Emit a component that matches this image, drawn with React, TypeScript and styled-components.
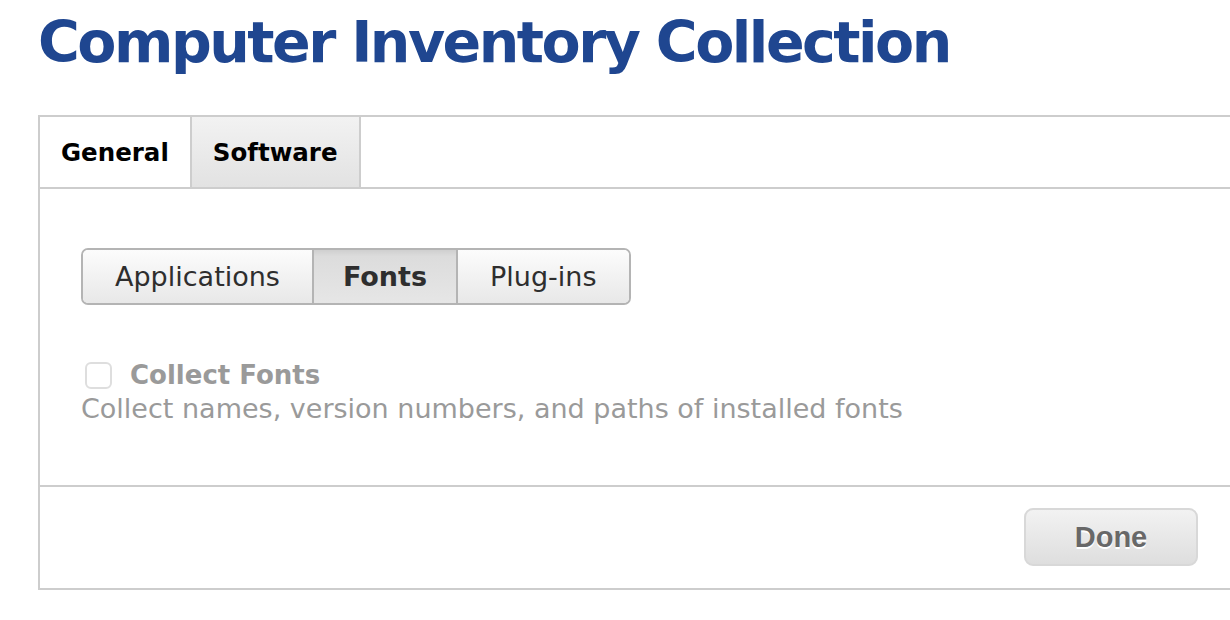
import styled, { createGlobalStyle } from "styled-components";

const Global = createGlobalStyle`
    html, body {
        margin: 0;
        padding: 0;
        background: #fff;
        overflow: hidden;
    }
    body {
        font-family: "DejaVu Sans", "Liberation Sans", sans-serif;
    }
`

const Page = styled.div`
    width: 1230px;
    height: 620px;
    padding-left: 38px;
    box-sizing: border-box;
    overflow: hidden;
`

const Heading = styled.h1`
    margin: 0;
    padding-top: 6px;
    height: 115px;
    box-sizing: border-box;
    font-size: 57px;
    font-weight: bold;
    color: #1f4690;
    letter-spacing: -2.5px;
    line-height: 72px;
`

const Panel = styled.div`
    width: 1220px;
    border: 2px solid #cdcdcd;
    box-sizing: border-box;
`

const TabBar = styled.div`
    display: flex;
    height: 70px;
    border-bottom: 2px solid #cdcdcd;
`

const Tab = styled.div<{ $active?: boolean }>`
    display: flex;
    align-items: center;
    justify-content: center;
    height: 100%;
    padding: 0 21px;
    font-size: 24.5px;
    font-weight: bold;
    color: #000;
    border-right: 2px solid #cdcdcd;
    background: ${p => p.$active ? "#fff" : "linear-gradient(#f2f2f2, #e2e2e2)"};
`

const Content = styled.div`
    padding: 59px 0 0 41px;
    height: 298px;
    box-sizing: border-box;
    border-bottom: 2px solid #cdcdcd;
`

const Segmented = styled.div`
    display: inline-flex;
    height: 57px;
    border: 2px solid #b4b4b4;
    border-radius: 7px;
    box-sizing: border-box;
    overflow: hidden;
`

const Segment = styled.div<{ $pressed?: boolean }>`
    display: flex;
    align-items: center;
    justify-content: center;
    padding: 0 ${p => p.$pressed ? 29 : 32}px;
    font-size: 27px;
    font-weight: ${p => p.$pressed ? "bold" : "normal"};
    color: #2e2e2e;
    background: ${p => p.$pressed
        ? "linear-gradient(#cfcfcf, #dcdcdc 12%, #e6e6e6)"
        : "linear-gradient(#fcfcfc, #e8e8e8)"};
    & + & {
        border-left: 2px solid #b4b4b4;
    }
`

const Option = styled.label`
    display: flex;
    align-items: center;
    gap: 18px;
    margin-top: 54px;
    margin-left: 4px;
    font-size: 26px;
    font-weight: bold;
    color: #9a9a9a;
    line-height: 32px;
`

const Box = styled.span`
    width: 27px;
    height: 27px;
    border: 2px solid #dedede;
    border-radius: 6px;
    box-sizing: border-box;
    background: #fff;
`

const Hint = styled.p`
    margin: 2px 0 0;
    font-size: 27px;
    color: #9a9a9a;
    line-height: 32px;
`

const Footer = styled.div`
    display: flex;
    justify-content: flex-start;
    height: 101px;
    padding: 21px 0 0 984px;
    box-sizing: border-box;
`

const DoneButton = styled.button`
    width: 174px;
    height: 58px;
    border: 2px solid #d8d8d8;
    border-radius: 9px;
    background: linear-gradient(#f2f2f2, #dedede);
    font-family: "Liberation Sans", Arial, sans-serif;
    font-size: 29px;
    font-weight: bold;
    color: #686868;
    text-shadow: 0 2px 0 #fff;
    padding: 0;
`

export default function App() {
    return (
        <Page>
            <Global />
            <Heading>Computer Inventory Collection</Heading>
            <Panel>
                <TabBar>
                    <Tab $active>General</Tab>
                    <Tab>Software</Tab>
                </TabBar>
                <Content>
                    <Segmented>
                        <Segment>Applications</Segment>
                        <Segment $pressed>Fonts</Segment>
                        <Segment>Plug-ins</Segment>
                    </Segmented>
                    <Option>
                        <Box />
                        Collect Fonts
                    </Option>
                    <Hint>Collect names, version numbers, and paths of installed fonts</Hint>
                </Content>
                <Footer>
                    <DoneButton>Done</DoneButton>
                </Footer>
            </Panel>
        </Page>
    );
}
